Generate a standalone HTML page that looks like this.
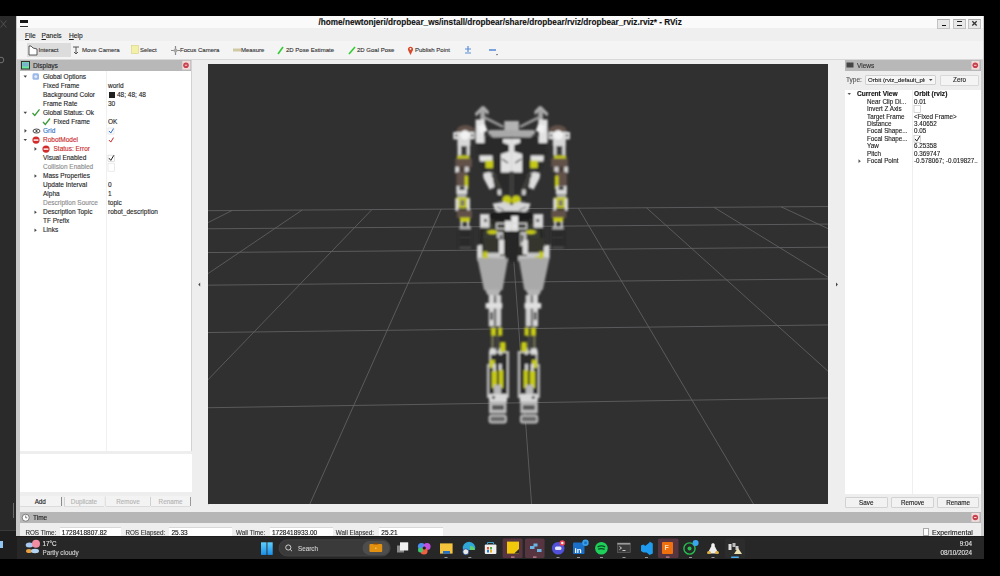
<!DOCTYPE html>
<html><head><meta charset="utf-8">
<style>
*{margin:0;padding:0;box-sizing:border-box}
html,body{width:1000px;height:576px;overflow:hidden;background:#000;font-family:"Liberation Sans",sans-serif}
.a{position:absolute}
.t{position:absolute;line-height:10px;height:10px;white-space:nowrap;-webkit-text-stroke:0.12px currentColor}
svg{position:absolute;overflow:visible}
</style></head><body>
<div class="a" style="left:0px;top:16px;width:17px;height:514px;background:#2a2a2a;"></div>
<div class="a" style="left:0px;top:530px;width:17px;height:30px;background:#1e1e1e;"></div>
<div class="a" style="left:0px;top:530.2px;width:17px;height:0.8px;background:#3a3a3a;"></div>
<div class="a" style="left:12.5px;top:503px;width:1.2px;height:15px;background:#6a6a6a;"></div>
<div class="a" style="left:0px;top:541px;width:3px;height:7px;background:#8fc5f0;"></div>
<svg style="left:0;top:0" width="20" height="80"><path d="M0.5 20.5 L6.5 27.5 M6.5 20.5 L0.5 27.5" stroke="#555" stroke-width="0.9"/><circle cx="1" cy="60" r="2.8" fill="none" stroke="#777" stroke-width="0.9"/></svg>
<div class="a" style="left:17px;top:16px;width:966px;height:520px;background:#eeeeee;"></div>
<div class="a" style="left:16px;top:16px;width:4px;height:520.4px;background:#c9c9c9;"></div>
<div class="a" style="left:980.5px;top:16px;width:3px;height:520.4px;background:#cdcdcd;"></div>
<div class="a" style="left:17px;top:16px;width:966px;height:12px;background:#fafafa;"></div>
<div class="a" style="left:17px;top:28px;width:966px;height:13px;background:#efefef;"></div>
<div class="a" style="left:17px;top:41px;width:966px;height:19px;background:#f4f4f4;"></div>
<div class="a" style="left:17px;top:59px;width:966px;height:1px;background:#d8d8d8;"></div>
<div class="a" style="left:20px;top:20px;width:8px;height:3px;background:#151515;"></div>
<div class="a" style="left:20px;top:25.5px;width:8px;height:1.5px;background:#303030;"></div>
<div class="t" style="left:318.5px;top:17.8px;font-size:8.2px;font-weight:bold;color:#111">/home/newtonjeri/dropbear_ws/install/dropbear/share/dropbear/rviz/dropbear_rviz.rviz* - RViz</div>
<div class="a" style="left:937.3px;top:19px;width:13px;height:9.5px;background:#e8e8e8;border:1px solid #c2c2c2;border-top-color:#aaa"></div>
<div class="a" style="left:952.6px;top:19px;width:13px;height:9.5px;background:#e8e8e8;border:1px solid #c2c2c2;border-top-color:#aaa"></div>
<div class="a" style="left:967.8px;top:19px;width:13px;height:9.5px;background:#e8e8e8;border:1px solid #c2c2c2;border-top-color:#aaa"></div>
<div class="a" style="left:941.6px;top:24.6px;width:4.4px;height:1.5px;background:#111;"></div>
<div class="a" style="left:956.7px;top:21.2px;width:5.4px;height:1.3px;background:#222;"></div>
<div class="a" style="left:956.7px;top:24.5px;width:5.4px;height:1.3px;background:#222;"></div>
<svg style="left:0;top:0" width="1000" height="40"><path d="M972.3 21.3 L976.7 25.5 M976.7 21.3 L972.3 25.5" stroke="#333" stroke-width="1.3"/></svg>
<div class="t" style="left:25px;top:31.00px;font-size:6.6px;color:#1e1e1e;"><u>F</u>ile</div>
<div class="t" style="left:41.5px;top:31.00px;font-size:6.6px;color:#1e1e1e;"><u>P</u>anels</div>
<div class="t" style="left:69px;top:31.00px;font-size:6.6px;color:#1e1e1e;"><u>H</u>elp</div>
<div class="a" style="left:26.5px;top:42.8px;width:44px;height:14px;background:#dcdcdc;"></div>
<div class="t" style="left:38.5px;top:45.00px;font-size:6.0px;color:#333;">Interact</div>
<div class="t" style="left:82px;top:45.00px;font-size:6.0px;color:#333;">Move Camera</div>
<div class="t" style="left:140px;top:45.00px;font-size:6.0px;color:#333;">Select</div>
<div class="t" style="left:180px;top:45.00px;font-size:6.0px;color:#333;">Focus Camera</div>
<div class="t" style="left:241px;top:45.00px;font-size:6.0px;color:#333;">Measure</div>
<div class="t" style="left:286px;top:45.00px;font-size:6.0px;color:#333;">2D Pose Estimate</div>
<div class="t" style="left:357px;top:45.00px;font-size:6.0px;color:#333;">2D Goal Pose</div>
<div class="t" style="left:415px;top:45.00px;font-size:6.0px;color:#333;">Publish Point</div>
<svg style="left:0;top:0" width="1000" height="576"><path d="M29 55 L29 46 L31 46 L33 48 L37 49 L37 55 Z" fill="#fff" stroke="#333" stroke-width="0.8"/><path d="M73 47 L79 47 M76 47 L76 54 M74 52 L76 54 L78 52" stroke="#555" stroke-width="1" fill="none"/><rect x="131.5" y="45.5" width="7" height="8" fill="#f3f0a8" stroke="#d8d080" stroke-width="0.6"/><path d="M171 50.5 L180 50.5 M175.5 46 L175.5 55" stroke="#888" stroke-width="1.2"/><circle cx="175.5" cy="50.5" r="2" fill="#aaa"/><rect x="233" y="48.5" width="8" height="3" fill="#cfc9a6"/><path d="M278 54 L283 47" stroke="#3c3" stroke-width="1.6"/><path d="M349 54 L355 47" stroke="#3c3" stroke-width="1.6"/><path d="M410.5 55 L408 50 A2.6 2.6 0 1 1 413 50 Z" fill="#d8482a"/><circle cx="410.5" cy="48.8" r="0.9" fill="#fff"/><path d="M465 49 L471 49 M468 46 L468 52 M465 53 L471 53" stroke="#5a8ed8" stroke-width="1.2"/><path d="M489 50 L496 50" stroke="#5a8ed8" stroke-width="1.6"/><path d="M496 54 L498 54 L497 55.5 Z" fill="#555"/></svg>
<div class="a" style="left:20px;top:60px;width:171.5px;height:10.8px;background:#b8b8b8;"></div>
<svg style="left:0;top:0" width="1000" height="576"><rect x="21.5" y="61.5" width="8" height="7.5" fill="#6e9" stroke="#333" stroke-width="1"/><rect x="22.5" y="62.5" width="6" height="4" fill="#7ab0d0"/></svg>
<div class="t" style="left:33px;top:60.50px;font-size:6.6px;color:#222;">Displays</div>
<svg style="left:0;top:0" width="1000" height="576"><rect x="182.3" y="60.8" width="8" height="8.8" fill="#f1dcdc"/><circle cx="186" cy="65.2" r="2.8" fill="#c8404c"/><path d="M184.8 65.2 L187.2 65.2" stroke="#fff" stroke-width="0.8"/></svg>
<div class="a" style="left:20px;top:70.8px;width:171.5px;height:380.5px;background:#ffffff;"></div>
<div class="a" style="left:191px;top:60px;width:1px;height:391px;background:#d2d2d2;"></div>
<div class="a" style="left:207.5px;top:64px;width:0.8px;height:441px;background:#d8d8d8;"></div>
<div class="a" style="left:105.5px;top:70.8px;width:0.8px;height:380.5px;background:#f0f0f0;"></div>
<div class="a" style="left:20px;top:453.8px;width:171.5px;height:38.7px;background:#ffffff;"></div>
<div class="t" style="left:43px;top:71.80px;font-size:6.5px;color:#1e1e1e;">Global Options</div>
<div class="t" style="left:43px;top:80.84px;font-size:6.5px;color:#1e1e1e;">Fixed Frame</div>
<div class="t" style="left:108px;top:80.84px;font-size:6.5px;color:#1e1e1e;">world</div>
<div class="t" style="left:43px;top:89.88px;font-size:6.5px;color:#1e1e1e;">Background Color</div>
<div class="a" style="left:109px;top:91.88px;width:6px;height:6px;background:#202020;"></div>
<div class="t" style="left:117px;top:89.88px;font-size:6.5px;color:#1e1e1e;">48; 48; 48</div>
<div class="t" style="left:43px;top:98.92px;font-size:6.5px;color:#1e1e1e;">Frame Rate</div>
<div class="t" style="left:108px;top:98.92px;font-size:6.5px;color:#1e1e1e;">30</div>
<div class="t" style="left:43px;top:107.96px;font-size:6.5px;color:#1e1e1e;">Global Status: Ok</div>
<div class="t" style="left:53.5px;top:117.00px;font-size:6.5px;color:#1e1e1e;">Fixed Frame</div>
<div class="t" style="left:108px;top:117.00px;font-size:6.5px;color:#1e1e1e;">OK</div>
<div class="t" style="left:43px;top:126.04px;font-size:6.5px;color:#2f6fc8;">Grid</div>
<div class="t" style="left:43px;top:135.08px;font-size:6.5px;color:#c8282a;">RobotModel</div>
<div class="t" style="left:53.5px;top:144.12px;font-size:6.5px;color:#c8282a;">Status: Error</div>
<div class="t" style="left:43px;top:153.16px;font-size:6.5px;color:#1e1e1e;">Visual Enabled</div>
<div class="t" style="left:43px;top:162.20px;font-size:6.5px;color:#8a8a8a;">Collision Enabled</div>
<div class="t" style="left:43px;top:171.24px;font-size:6.5px;color:#1e1e1e;">Mass Properties</div>
<div class="t" style="left:43px;top:180.28px;font-size:6.5px;color:#1e1e1e;">Update Interval</div>
<div class="t" style="left:108px;top:180.28px;font-size:6.5px;color:#1e1e1e;">0</div>
<div class="t" style="left:43px;top:189.32px;font-size:6.5px;color:#1e1e1e;">Alpha</div>
<div class="t" style="left:108px;top:189.32px;font-size:6.5px;color:#1e1e1e;">1</div>
<div class="t" style="left:43px;top:198.36px;font-size:6.5px;color:#8a8a8a;">Description Source</div>
<div class="t" style="left:108px;top:198.36px;font-size:6.5px;color:#1e1e1e;">topic</div>
<div class="t" style="left:43px;top:207.40px;font-size:6.5px;color:#1e1e1e;">Description Topic</div>
<div class="t" style="left:108px;top:207.40px;font-size:6.5px;color:#1e1e1e;">robot_description</div>
<div class="t" style="left:43px;top:216.44px;font-size:6.5px;color:#1e1e1e;">TF Prefix</div>
<div class="t" style="left:43px;top:225.48px;font-size:6.5px;color:#1e1e1e;">Links</div>
<svg style="left:0;top:0" width="1000" height="576"><path d="M23.5 75.6 L27 75.6 L25.25 77.8Z" fill="#444"/><rect x="32.5" y="73.3" width="6.5" height="6.5" rx="1.5" fill="#9ab8e8"/><circle cx="35.75" cy="76.55" r="1.6" fill="#dde8f8"/><path d="M23.5 111.75999999999999 L27 111.75999999999999 L25.25 113.96Z" fill="#444"/><path d="M32.5 112.96 L34.8 115.46 L39.5 109.46" stroke="#3a9a3a" stroke-width="1.3" fill="none"/><path d="M43 122.0 L45.3 124.5 L50 118.5" stroke="#3a9a3a" stroke-width="1.3" fill="none"/><path d="M24.5 129.04 L24.5 132.64 L26.8 130.84Z" fill="#444"/><ellipse cx="36.5" cy="131.04" rx="3.5" ry="2" fill="none" stroke="#444" stroke-width="1"/><circle cx="36.5" cy="131.04" r="1.1" fill="#444"/><rect x="108" y="128.04" width="6" height="6" fill="#fff" stroke="#ddd" stroke-width="0.6"/><path d="M109 131.04 L110.8 133.04 L113.5 128.54" stroke="#2f6fc8" stroke-width="1" fill="none"/><path d="M23.5 138.88 L27 138.88 L25.25 141.07999999999998Z" fill="#444"/><circle cx="36" cy="140.07999999999998" r="3.6" fill="#d42a2a"/><rect x="33.6" y="139.38" width="4.8" height="1.4" fill="#fff"/><path d="M109 140.07999999999998 L110.8 142.07999999999998 L113.5 137.57999999999998" stroke="#c8282a" stroke-width="1" fill="none"/><path d="M34.5 147.12 L34.5 150.72 L36.8 148.92000000000002Z" fill="#444"/><circle cx="46" cy="149.12" r="3.6" fill="#d42a2a"/><rect x="43.6" y="148.42000000000002" width="4.8" height="1.4" fill="#fff"/><rect x="108" y="155.15999999999997" width="6.5" height="6.5" fill="#fff" stroke="#ccc" stroke-width="0.6"/><path d="M109 158.15999999999997 L110.8 160.35999999999996 L113.8 155.35999999999996" stroke="#222" stroke-width="1" fill="none"/><rect x="108" y="163.2" width="6.5" height="8" fill="#fff" stroke="#ddd" stroke-width="0.6"/><path d="M34.5 174.24 L34.5 177.84 L36.8 176.04000000000002Z" fill="#444"/><path d="M34.5 210.39999999999998 L34.5 213.99999999999997 L36.8 212.2Z" fill="#444"/><path d="M34.5 228.47999999999996 L34.5 232.07999999999996 L36.8 230.27999999999997Z" fill="#444"/></svg>
<div class="a" style="left:20px;top:495.8px;width:40.5px;height:11.3px;background:#f3f3f3;border-bottom:1px solid #dcdcdc"></div>
<div class="t" style="left:20px;width:40.5px;text-align:center;top:496.6px;font-size:6.3px;color:#222">Add</div>
<div class="a" style="left:64px;top:495.8px;width:40px;height:11.3px;background:#f3f3f3;border-bottom:1px solid #dcdcdc"></div>
<div class="t" style="left:64px;width:40px;text-align:center;top:496.6px;font-size:6.3px;color:#b4b4b4">Duplicate</div>
<div class="a" style="left:106px;top:495.8px;width:44px;height:11.3px;background:#f3f3f3;border-bottom:1px solid #dcdcdc"></div>
<div class="t" style="left:106px;width:44px;text-align:center;top:496.6px;font-size:6.3px;color:#b4b4b4">Remove</div>
<div class="a" style="left:151px;top:495.8px;width:39px;height:11.3px;background:#f3f3f3;border-bottom:1px solid #dcdcdc"></div>
<div class="t" style="left:151px;width:39px;text-align:center;top:496.6px;font-size:6.3px;color:#b4b4b4">Rename</div>
<div class="a" style="left:60.5px;top:497px;width:1px;height:9px;background:#8a8a8a;"></div>
<div class="a" style="left:190px;top:497px;width:1px;height:9px;background:#9a9a9a;"></div>
<div class="a" style="left:63.5px;top:497px;width:0.8px;height:9px;background:#d0d0d0;"></div>
<div class="a" style="left:105px;top:497px;width:0.8px;height:9px;background:#e0e0e0;"></div>
<div class="a" style="left:150.3px;top:497px;width:0.8px;height:9px;background:#d0d0d0;"></div>
<div class="a" style="left:208px;top:64.4px;width:620px;height:440px;background:#303030;overflow:hidden">
<svg style="left:0;top:0" width="620" height="440" stroke="#626264" stroke-width="0.85" fill="none"><line x1="-46.5" y1="147.0" x2="639.8" y2="142.4"/><line x1="-93.1" y1="165.5" x2="685.8" y2="159.6"/><line x1="-154.5" y1="189.9" x2="745.9" y2="182.1"/><line x1="-239.2" y1="223.6" x2="827.8" y2="212.8"/><line x1="-363.5" y1="273.0" x2="945.6" y2="256.9"/><line x1="-563.7" y1="352.6" x2="1129.9" y2="326.0"/><line x1="-939.7" y1="502.0" x2="1459.2" y2="449.3"/><line x1="-46.5" y1="147.0" x2="-1286.3" y2="639.8"/><line x1="24.1" y1="146.5" x2="-942.9" y2="630.4"/><line x1="94.2" y1="146.0" x2="-609.5" y2="621.2"/><line x1="163.9" y1="145.6" x2="-285.7" y2="612.2"/><line x1="233.2" y1="145.1" x2="29.0" y2="603.6"/><line x1="302.0" y1="144.6" x2="334.9" y2="595.1"/><line x1="370.4" y1="144.2" x2="632.4" y2="586.9"/><line x1="438.4" y1="143.7" x2="921.8" y2="578.9"/><line x1="505.9" y1="143.3" x2="1203.5" y2="571.2"/><line x1="573.1" y1="142.8" x2="1477.7" y2="563.6"/><line x1="639.8" y1="142.4" x2="1744.8" y2="556.3"/></svg>
</div>
<svg style="left:0;top:0" width="1000" height="576"><path d="M200.2 282.6 L200.2 286.4 L198.3 284.5Z" fill="#444"/><path d="M836 282.6 L836 286.4 L837.9 284.5Z" fill="#444"/></svg>
<svg style="left:0;top:0" width="1000" height="576"><defs><filter id="bl" x="-5%" y="-5%" width="110%" height="110%"><feGaussianBlur stdDeviation="0.85"/></filter></defs><g filter="url(#bl)"><polygon points="476,137 511.5,137 511.5,200 500,200 484,172 478,158" fill="#2b2c29" /><polygon points="474.8,113.5 481.8,106.3 484.2,106.3 489,111.5 488.2,115 483.5,110.8 482,110.8 476.2,116.5" fill="#b0b0b0" /><rect x="480.2" y="109.5" width="4.8" height="17.2" fill="#a4a4a4" /><rect x="475.6" y="119.5" width="8.9" height="23.5" fill="#e2e2e2" /><polygon points="478,126 485,124 487.5,131 480,133" fill="#f2f2f2" /><line x1="484.5" y1="117.5" x2="503.25" y2="126.8" stroke="#9a9a9a" stroke-width="2.6"/><rect x="504.3" y="121" width="7.65" height="9.5" fill="#b4b4b4" /><polygon points="488.7,130 511.95,130 511.95,137 493,137.5 488,133.5" fill="#a9a9a9" /><polygon points="503,139 511.95,139 511.95,172.5 501,172.5 501,154 509,151.5 509,145 503,142.8" fill="#e2e2e2" /><line x1="502" y1="159" x2="508" y2="163" stroke="#3a3a3a" stroke-width="1.4"/><line x1="486" y1="160" x2="494" y2="176" stroke="#3b3b39" stroke-width="3.6"/><rect x="479.5" y="155.5" width="13.0" height="6.0" fill="#e2e2e2" /><rect x="485.5" y="160.5" width="7.5" height="7.5" fill="#c6ca14" /><rect x="509.3" y="171.5" width="2.65" height="27.5" fill="#3e3e3c" /><polygon points="483,173.5 488.7,172 496,175 493,180 494.5,187 489.7,189.7 483.5,178" fill="#dcdcdc" /><line x1="493" y1="174" x2="506.5" y2="204" stroke="#3c3c3a" stroke-width="4.2"/><rect x="497.5" y="189.5" width="3.5" height="5.5" fill="#d0d0d0" /><ellipse cx="507" cy="200.5" rx="4.6" ry="5" fill="#c6ca14"/><polygon points="492.6,203.5 504,201.7 511.95,205 511.95,214.2 503,214 495,210.5" fill="#d6d6d6" /><line x1="497" y1="207" x2="504" y2="210" stroke="#555" stroke-width="1"/><polygon points="482,214 511.95,214 511.95,262 479,262 480,240" fill="#2a2b27" /><ellipse cx="511.5" cy="216" rx="23" ry="5" fill="#1a1a1a"/><ellipse cx="490.5" cy="238" rx="8.5" ry="15.5" fill="#393b33" stroke="#1c1c1c" stroke-width="1.2"/><rect x="480" y="214" width="9.5" height="13.7" fill="#d8d8d8" /><rect x="484" y="219" width="3" height="3" fill="#555" /><rect x="505" y="216" width="6.95" height="15" fill="#e6e6e6" /><rect x="496.75" y="223.5" width="15.2" height="5.25" fill="none" stroke="#d8d8d8" stroke-width="1.4"/><ellipse cx="492.5" cy="232" rx="5.5" ry="2" fill="#c6ca14"/><rect x="496.75" y="232" width="6.25" height="14" fill="#bdbdbd" /><rect x="500" y="235" width="2" height="7" fill="#333" /><rect x="477.2" y="246.7" width="4.8" height="12.3" fill="#dcdcdc" /><rect x="477.2" y="256" width="27.8" height="5" fill="#c4c4c4" /><rect x="482.4" y="250.8" width="5.2" height="8.4" fill="#c6ca14" /><rect x="505.3" y="232" width="6.65" height="30" fill="#252525" /><ellipse cx="465.5" cy="131" rx="9" ry="6" fill="#62514a"/><rect x="453.25" y="132" width="21.35" height="7.3" fill="#e4e4e4" /><rect x="455" y="134" width="2.5" height="3" fill="#666" /><rect x="471" y="134" width="2.2" height="3" fill="#666" /><rect x="457.4" y="133" width="13.0" height="13" fill="#d8d8d8" /><circle cx="465" cy="135" r="4.7" fill="#f2f2f2"/><rect x="457.6" y="146" width="3.4" height="9.5" fill="#dcdcdc" /><rect x="466.5" y="146" width="3.5" height="9.5" fill="#d4d4d4" /><rect x="461" y="146" width="5.5" height="9.5" fill="#3a3a3a" /><rect x="457" y="155.5" width="12.5" height="4.5" fill="#c6ca14" /><rect x="455.3" y="158.5" width="16.7" height="8.8" fill="#62514a" /><rect x="455.5" y="166.5" width="15.5" height="5.5" fill="#4a3e38" /><rect x="455" y="166.7" width="4" height="6.3" fill="#d4d4d4" /><rect x="464.7" y="166.7" width="4.1" height="5.3" fill="#cfcfcf" /><rect x="456.3" y="172" width="11.1" height="15" fill="#62514a" /><rect x="464.7" y="175.6" width="3.7" height="13.4" fill="#c6ca14" /><rect x="456.3" y="186" width="11.1" height="8.4" fill="#d8d8d8" /><rect x="457" y="194.4" width="9.5" height="3.6" fill="#a8a8a8" /><rect x="459.5" y="186.5" width="5.0" height="3.5" fill="#2a2a2a" /><rect x="455.6" y="197.5" width="13.9" height="10.8" fill="#c6ca14" /><rect x="455.3" y="198.5" width="3.2" height="12.5" fill="#dadada" /><rect x="467" y="198.5" width="3" height="12.5" fill="#dadada" /><rect x="460.5" y="200" width="4.0" height="6" fill="#7a7a6a" /><rect x="456.9" y="210.2" width="15.1" height="7.8" fill="#62514a" /><rect x="460" y="217.5" width="10" height="4.7" fill="#c6ca14" /><rect x="460.5" y="221.7" width="2.0" height="5.2" fill="#dadada" /><rect x="467" y="221.7" width="2" height="5.2" fill="#dadada" /><rect x="459.5" y="226.4" width="11.5" height="3.1" fill="#b0b0b0" /><rect x="458.5" y="229.5" width="13.0" height="19.25" fill="#2b2b2b" /><rect x="459.5" y="237" width="11.5" height="1" fill="#3a3a3a" /><rect x="459.5" y="246.7" width="11.5" height="2.05" fill="#505050" /><g transform="translate(1023.2,0) scale(-1,1)"><polygon points="476,137 511.5,137 511.5,200 500,200 484,172 478,158" fill="#2b2c29" /><polygon points="474.8,113.5 481.8,106.3 484.2,106.3 489,111.5 488.2,115 483.5,110.8 482,110.8 476.2,116.5" fill="#b0b0b0" /><rect x="480.2" y="109.5" width="4.8" height="17.2" fill="#a4a4a4" /><rect x="475.6" y="119.5" width="8.9" height="23.5" fill="#e2e2e2" /><polygon points="478,126 485,124 487.5,131 480,133" fill="#f2f2f2" /><line x1="484.5" y1="117.5" x2="503.25" y2="126.8" stroke="#9a9a9a" stroke-width="2.6"/><rect x="504.3" y="121" width="7.65" height="9.5" fill="#b4b4b4" /><polygon points="488.7,130 511.95,130 511.95,137 493,137.5 488,133.5" fill="#a9a9a9" /><polygon points="503,139 511.95,139 511.95,172.5 501,172.5 501,154 509,151.5 509,145 503,142.8" fill="#e2e2e2" /><line x1="502" y1="159" x2="508" y2="163" stroke="#3a3a3a" stroke-width="1.4"/><line x1="486" y1="160" x2="494" y2="176" stroke="#3b3b39" stroke-width="3.6"/><rect x="479.5" y="155.5" width="13.0" height="6.0" fill="#e2e2e2" /><rect x="485.5" y="160.5" width="7.5" height="7.5" fill="#c6ca14" /><rect x="509.3" y="171.5" width="2.65" height="27.5" fill="#3e3e3c" /><polygon points="483,173.5 488.7,172 496,175 493,180 494.5,187 489.7,189.7 483.5,178" fill="#dcdcdc" /><line x1="493" y1="174" x2="506.5" y2="204" stroke="#3c3c3a" stroke-width="4.2"/><rect x="497.5" y="189.5" width="3.5" height="5.5" fill="#d0d0d0" /><ellipse cx="507" cy="200.5" rx="4.6" ry="5" fill="#c6ca14"/><polygon points="492.6,203.5 504,201.7 511.95,205 511.95,214.2 503,214 495,210.5" fill="#d6d6d6" /><line x1="497" y1="207" x2="504" y2="210" stroke="#555" stroke-width="1"/><polygon points="482,214 511.95,214 511.95,262 479,262 480,240" fill="#2a2b27" /><ellipse cx="511.5" cy="216" rx="23" ry="5" fill="#1a1a1a"/><ellipse cx="490.5" cy="238" rx="8.5" ry="15.5" fill="#393b33" stroke="#1c1c1c" stroke-width="1.2"/><rect x="480" y="214" width="9.5" height="13.7" fill="#d8d8d8" /><rect x="484" y="219" width="3" height="3" fill="#555" /><rect x="505" y="216" width="6.95" height="15" fill="#e6e6e6" /><rect x="496.75" y="223.5" width="15.2" height="5.25" fill="none" stroke="#d8d8d8" stroke-width="1.4"/><ellipse cx="492.5" cy="232" rx="5.5" ry="2" fill="#c6ca14"/><rect x="496.75" y="232" width="6.25" height="14" fill="#bdbdbd" /><rect x="500" y="235" width="2" height="7" fill="#333" /><rect x="477.2" y="246.7" width="4.8" height="12.3" fill="#dcdcdc" /><rect x="477.2" y="256" width="27.8" height="5" fill="#c4c4c4" /><rect x="482.4" y="250.8" width="5.2" height="8.4" fill="#c6ca14" /><rect x="505.3" y="232" width="6.65" height="30" fill="#252525" /><ellipse cx="465.5" cy="131" rx="9" ry="6" fill="#62514a"/><rect x="453.25" y="132" width="21.35" height="7.3" fill="#e4e4e4" /><rect x="455" y="134" width="2.5" height="3" fill="#666" /><rect x="471" y="134" width="2.2" height="3" fill="#666" /><rect x="457.4" y="133" width="13.0" height="13" fill="#d8d8d8" /><circle cx="465" cy="135" r="4.7" fill="#f2f2f2"/><rect x="457.6" y="146" width="3.4" height="9.5" fill="#dcdcdc" /><rect x="466.5" y="146" width="3.5" height="9.5" fill="#d4d4d4" /><rect x="461" y="146" width="5.5" height="9.5" fill="#3a3a3a" /><rect x="457" y="155.5" width="12.5" height="4.5" fill="#c6ca14" /><rect x="455.3" y="158.5" width="16.7" height="8.8" fill="#62514a" /><rect x="455.5" y="166.5" width="15.5" height="5.5" fill="#4a3e38" /><rect x="455" y="166.7" width="4" height="6.3" fill="#d4d4d4" /><rect x="464.7" y="166.7" width="4.1" height="5.3" fill="#cfcfcf" /><rect x="456.3" y="172" width="11.1" height="15" fill="#62514a" /><rect x="464.7" y="175.6" width="3.7" height="13.4" fill="#c6ca14" /><rect x="456.3" y="186" width="11.1" height="8.4" fill="#d8d8d8" /><rect x="457" y="194.4" width="9.5" height="3.6" fill="#a8a8a8" /><rect x="459.5" y="186.5" width="5.0" height="3.5" fill="#2a2a2a" /><rect x="455.6" y="197.5" width="13.9" height="10.8" fill="#c6ca14" /><rect x="455.3" y="198.5" width="3.2" height="12.5" fill="#dadada" /><rect x="467" y="198.5" width="3" height="12.5" fill="#dadada" /><rect x="460.5" y="200" width="4.0" height="6" fill="#7a7a6a" /><rect x="456.9" y="210.2" width="15.1" height="7.8" fill="#62514a" /><rect x="460" y="217.5" width="10" height="4.7" fill="#c6ca14" /><rect x="460.5" y="221.7" width="2.0" height="5.2" fill="#dadada" /><rect x="467" y="221.7" width="2" height="5.2" fill="#dadada" /><rect x="459.5" y="226.4" width="11.5" height="3.1" fill="#b0b0b0" /><rect x="458.5" y="229.5" width="13.0" height="19.25" fill="#2b2b2b" /><rect x="459.5" y="237" width="11.5" height="1" fill="#3a3a3a" /><rect x="459.5" y="246.7" width="11.5" height="2.05" fill="#505050" /></g><rect x="483" y="238" width="16" height="15" fill="#34362f" /><rect x="477.2" y="245" width="4.8" height="13.5" fill="#d8d8d8" /><rect x="487" y="252.8" width="13" height="3.6" fill="#c8c8c8" /><rect x="499" y="240" width="5" height="14.6" fill="#dcdcdc" /><polygon points="477.2,257.5 508,258.5 502.5,290 484,290" fill="#a9a9a9" /><rect x="483.2" y="251.5" width="4.3" height="6.7" fill="#c6ca14" /><polygon points="485,289.5 501.5,289.5 498.5,295 487.5,295" fill="#b4b4b4" /><rect x="488.75" y="295" width="5.75" height="31.5" fill="#d4d4d4" /><rect x="495.5" y="295" width="5.75" height="31.5" fill="#cfcfcf" /><rect x="494.5" y="297" width="1.0" height="28" fill="#333" /><rect x="485.6" y="303" width="16.7" height="5.5" fill="#e0e0e0" /><rect x="490" y="312" width="3" height="8" fill="#555" /><rect x="490.8" y="327.5" width="5.2" height="8.3" fill="#c6ca14" /><rect x="498" y="327.5" width="4.3" height="8.3" fill="#c6ca14" /><rect x="491" y="335.8" width="3" height="14.2" fill="#6a6a50" /><rect x="496" y="335.8" width="3" height="16.2" fill="#444" /><rect x="500.2" y="342" width="5.2" height="12.6" fill="#c6ca14" /><path d="M488 397 L488 365 L490 365 L490 352 L508 352 L508 397 Z" fill="#2a2a2a" stroke="#bdbdbd" stroke-width="2.2"/><rect x="489.6" y="348.3" width="6.2" height="6.3" fill="#dcdcdc" /><rect x="499" y="348.3" width="3" height="6.3" fill="#dcdcdc" /><rect x="500.2" y="344" width="5.2" height="8" fill="#c6ca14" /><rect x="489.6" y="359.8" width="5.2" height="8.2" fill="#c6ca14" /><rect x="493.2" y="364" width="2.6" height="7" fill="#dcdcdc" /><rect x="499" y="364" width="2.6" height="7" fill="#dcdcdc" /><rect x="491.7" y="371" width="5.2" height="17" fill="#c6ca14" /><rect x="499" y="370" width="4.1" height="18" fill="#c6ca14" /><rect x="493.75" y="385" width="7.25" height="15" fill="#b8b8b8" /><rect x="489" y="394" width="18" height="8.5" fill="#d8d8d8" /><rect x="492" y="396" width="3" height="3" fill="#555" /><rect x="489" y="402.5" width="17.5" height="10.9" fill="#bcbcbc" /><rect x="492" y="405" width="12" height="5" fill="#5a5a5a" /><rect x="489.5" y="415.5" width="16.5" height="7" rx="2" fill="#6a6a6a" stroke="#c4c4c4" stroke-width="1.8"/><g transform="translate(1026.8,0) scale(-1,1)"><rect x="483" y="238" width="16" height="15" fill="#34362f" /><rect x="477.2" y="245" width="4.8" height="13.5" fill="#d8d8d8" /><rect x="487" y="252.8" width="13" height="3.6" fill="#c8c8c8" /><rect x="499" y="240" width="5" height="14.6" fill="#dcdcdc" /><polygon points="477.2,257.5 508,258.5 502.5,290 484,290" fill="#a9a9a9" /><rect x="483.2" y="251.5" width="4.3" height="6.7" fill="#c6ca14" /><polygon points="485,289.5 501.5,289.5 498.5,295 487.5,295" fill="#b4b4b4" /><rect x="488.75" y="295" width="5.75" height="31.5" fill="#d4d4d4" /><rect x="495.5" y="295" width="5.75" height="31.5" fill="#cfcfcf" /><rect x="494.5" y="297" width="1.0" height="28" fill="#333" /><rect x="485.6" y="303" width="16.7" height="5.5" fill="#e0e0e0" /><rect x="490" y="312" width="3" height="8" fill="#555" /><rect x="490.8" y="327.5" width="5.2" height="8.3" fill="#c6ca14" /><rect x="498" y="327.5" width="4.3" height="8.3" fill="#c6ca14" /><rect x="491" y="335.8" width="3" height="14.2" fill="#6a6a50" /><rect x="496" y="335.8" width="3" height="16.2" fill="#444" /><rect x="500.2" y="342" width="5.2" height="12.6" fill="#c6ca14" /><path d="M488 397 L488 365 L490 365 L490 352 L508 352 L508 397 Z" fill="#2a2a2a" stroke="#bdbdbd" stroke-width="2.2"/><rect x="489.6" y="348.3" width="6.2" height="6.3" fill="#dcdcdc" /><rect x="499" y="348.3" width="3" height="6.3" fill="#dcdcdc" /><rect x="500.2" y="344" width="5.2" height="8" fill="#c6ca14" /><rect x="489.6" y="359.8" width="5.2" height="8.2" fill="#c6ca14" /><rect x="493.2" y="364" width="2.6" height="7" fill="#dcdcdc" /><rect x="499" y="364" width="2.6" height="7" fill="#dcdcdc" /><rect x="491.7" y="371" width="5.2" height="17" fill="#c6ca14" /><rect x="499" y="370" width="4.1" height="18" fill="#c6ca14" /><rect x="493.75" y="385" width="7.25" height="15" fill="#b8b8b8" /><rect x="489" y="394" width="18" height="8.5" fill="#d8d8d8" /><rect x="492" y="396" width="3" height="3" fill="#555" /><rect x="489" y="402.5" width="17.5" height="10.9" fill="#bcbcbc" /><rect x="492" y="405" width="12" height="5" fill="#5a5a5a" /><rect x="489.5" y="415.5" width="16.5" height="7" rx="2" fill="#6a6a6a" stroke="#c4c4c4" stroke-width="1.8"/></g></g></svg>
<div class="a" style="left:845px;top:59.7px;width:135.5px;height:11.3px;background:#b8b8b8;"></div>
<svg style="left:0;top:0" width="1000" height="576"><rect x="846.5" y="62.5" width="7" height="5" fill="#444"/><rect x="971.5" y="60.9" width="8" height="8.8" fill="#f1dcdc"/><circle cx="975.3" cy="65.3" r="2.8" fill="#c8404c"/><path d="M974.1 65.3 L976.5 65.3" stroke="#fff" stroke-width="0.8"/></svg>
<div class="t" style="left:857px;top:60.50px;font-size:6.5px;color:#333;">Views</div>
<div class="t" style="left:846px;top:75.00px;font-size:6.5px;color:#555;">Type:</div>
<div class="a" style="left:864.7px;top:74.7px;width:71.3px;height:10.5px;background:#f6f6f6;border:1px solid #d0d0d0;border-radius:1px"></div>
<div class="t" style="left:868px;top:75.00px;font-size:6.1px;color:#222;width:57px;overflow:hidden">Orbit (rviz_default_plugins)</div>
<svg style="left:0;top:0" width="1000" height="576"><path d="M929 79 L932.5 79 L930.75 81Z" fill="#444"/></svg>
<div class="a" style="left:939.7px;top:74.5px;width:39.7px;height:11px;background:#f4f4f4;border:1px solid #d8d8d8;border-radius:1px"></div>
<div class="t" style="left:939.7px;width:39.7px;text-align:center;top:75px;font-size:6.3px;color:#222">Zero</div>
<div class="a" style="left:845px;top:89.7px;width:135.5px;height:404.3px;background:#ffffff;"></div>
<div class="a" style="left:912.3px;top:89.7px;width:0.8px;height:404.3px;background:#efefef;"></div>
<div class="t" style="left:857px;top:89.10px;font-size:6.6px;color:#111;font-weight:bold">Current View</div>
<div class="t" style="left:914px;top:89.10px;font-size:6.6px;color:#111;font-weight:bold">Orbit (rviz)</div>
<div class="t" style="left:867px;top:96.57px;font-size:6.3px;color:#222;">Near Clip Di...</div>
<div class="t" style="left:914px;top:96.57px;font-size:6.3px;color:#222;">0.01</div>
<div class="t" style="left:867px;top:104.04px;font-size:6.3px;color:#222;">Invert Z Axis</div>
<div class="t" style="left:867px;top:111.51px;font-size:6.3px;color:#222;">Target Frame</div>
<div class="t" style="left:914px;top:111.51px;font-size:6.3px;color:#222;">&lt;Fixed Frame&gt;</div>
<div class="t" style="left:867px;top:118.98px;font-size:6.3px;color:#222;">Distance</div>
<div class="t" style="left:914px;top:118.98px;font-size:6.3px;color:#222;">3.40652</div>
<div class="t" style="left:867px;top:126.45px;font-size:6.3px;color:#222;">Focal Shape...</div>
<div class="t" style="left:914px;top:126.45px;font-size:6.3px;color:#222;">0.05</div>
<div class="t" style="left:867px;top:133.92px;font-size:6.3px;color:#222;">Focal Shape...</div>
<div class="t" style="left:867px;top:141.39px;font-size:6.3px;color:#222;">Yaw</div>
<div class="t" style="left:914px;top:141.39px;font-size:6.3px;color:#222;">6.25358</div>
<div class="t" style="left:867px;top:148.86px;font-size:6.3px;color:#222;">Pitch</div>
<div class="t" style="left:914px;top:148.86px;font-size:6.3px;color:#222;">0.369747</div>
<div class="t" style="left:867px;top:156.33px;font-size:6.3px;color:#222;">Focal Point</div>
<div class="t" style="left:914px;top:156.33px;font-size:6.3px;color:#222;width:64px;overflow:hidden">-0.578067; -0.019827...</div>
<svg style="left:0;top:0" width="1000" height="576"><path d="M847.5 92.89999999999999 L851 92.89999999999999 L849.25 95.1Z" fill="#555"/><rect x="914" y="105.53999999999999" width="6.5" height="7" fill="#fff" stroke="#bbb" stroke-width="0.6"/><rect x="914" y="135.42" width="6.5" height="7" fill="#fff" stroke="#bbb" stroke-width="0.6"/><path d="M915 138.92 L916.8 141.11999999999998 L919.8 136.11999999999998" stroke="#222" stroke-width="1" fill="none"/><path d="M858.5 159.32999999999998 L858.5 162.92999999999998 L860.8 161.13Z" fill="#555"/></svg>
<div class="a" style="left:845px;top:497px;width:42.60000000000002px;height:11.3px;background:#f2f2f2;border:1px solid #d2d2d2;border-radius:1px"></div>
<div class="t" style="left:845px;width:42.60000000000002px;text-align:center;top:497.8px;font-size:6.3px;color:#222">Save</div>
<div class="a" style="left:891.4px;top:497px;width:42.5px;height:11.3px;background:#f2f2f2;border:1px solid #d2d2d2;border-radius:1px"></div>
<div class="t" style="left:891.4px;width:42.5px;text-align:center;top:497.8px;font-size:6.3px;color:#222">Remove</div>
<div class="a" style="left:937px;top:497px;width:42.39999999999998px;height:11.3px;background:#f2f2f2;border:1px solid #d2d2d2;border-radius:1px"></div>
<div class="t" style="left:937px;width:42.39999999999998px;text-align:center;top:497.8px;font-size:6.3px;color:#222">Rename</div>
<div class="a" style="left:20px;top:512.3px;width:960.5px;height:10.7px;background:#b6b6b6;"></div>
<svg style="left:0;top:0" width="1000" height="576"><circle cx="25.7" cy="517.7" r="3.5" fill="#fff" stroke="#666" stroke-width="0.8"/><path d="M25.7 515.5 L25.7 517.8 L27.3 517.8" stroke="#444" stroke-width="0.7" fill="none"/><rect x="971.5" y="513" width="8" height="8.8" fill="#f1dcdc"/><circle cx="975.3" cy="517.5" r="2.8" fill="#c8404c"/><path d="M974.1 517.5 L976.5 517.5" stroke="#fff" stroke-width="0.8"/></svg>
<div class="t" style="left:33px;top:512.70px;font-size:6.5px;color:#222;">Time</div>
<div class="t" style="left:25.4px;top:528.00px;font-size:6.3px;color:#333;">ROS Time:</div>
<div class="a" style="left:59.8px;top:527.2px;width:61.60000000000001px;height:10px;background:#fff;border-top:1px solid #d8d8d8"></div>
<div class="t" style="left:61.8px;top:528.00px;font-size:6.5px;color:#111;">1728418807.82</div>
<div class="t" style="left:125.4px;top:528.00px;font-size:6.3px;color:#333;">ROS Elapsed:</div>
<div class="a" style="left:169.4px;top:527.2px;width:62.900000000000006px;height:10px;background:#fff;border-top:1px solid #d8d8d8"></div>
<div class="t" style="left:171.4px;top:528.00px;font-size:6.5px;color:#111;">25.33</div>
<div class="t" style="left:236px;top:528.00px;font-size:6.3px;color:#333;">Wall Time:</div>
<div class="a" style="left:270px;top:527.2px;width:63px;height:10px;background:#fff;border-top:1px solid #d8d8d8"></div>
<div class="t" style="left:272px;top:528.00px;font-size:6.5px;color:#111;">1728418933.00</div>
<div class="t" style="left:335.8px;top:528.00px;font-size:6.3px;color:#333;">Wall Elapsed:</div>
<div class="a" style="left:379.3px;top:527.2px;width:63.69999999999999px;height:10px;background:#fff;border-top:1px solid #d8d8d8"></div>
<div class="t" style="left:381.3px;top:528.00px;font-size:6.5px;color:#111;">25.21</div>
<div class="a" style="left:922.6px;top:528px;width:6.5px;height:8px;background:#fff;border:1px solid #aaa"></div>
<div class="t" style="left:932px;top:528.30px;font-size:7px;color:#222;">Experimental</div>
<div class="a" style="left:16.5px;top:536px;width:967.5px;height:23.5px;background:#272727;"></div>
<div class="a" style="left:16.5px;top:536px;width:967.5px;height:1.2px;background:#1d1d1d;"></div>
<div class="a" style="left:0px;top:559.4px;width:1000px;height:17px;background:#000;"></div>
<svg style="left:0;top:0" width="1000" height="576"><ellipse cx="29.5" cy="545" rx="3.8" ry="2.5" fill="#a9c9f2"/><circle cx="36" cy="543.8" r="4" fill="#f18ea3"/><ellipse cx="29" cy="551" rx="3" ry="2" fill="#e8a040"/><ellipse cx="35" cy="551" rx="4" ry="2.2" fill="#b4d4f4"/><defs><linearGradient id="wg" x1="0" y1="0" x2="0" y2="1"><stop offset="0" stop-color="#5ccfff"/><stop offset="1" stop-color="#1b8fe8"/></linearGradient></defs><rect x="261" y="542.3" width="5.5" height="12.6" fill="url(#wg)"/><rect x="267.4" y="542.3" width="5.3" height="12.6" fill="url(#wg)"/><rect x="279" y="539.8" width="111.2" height="16.2" rx="8.1" fill="#3a3a3a" stroke="#4e4e4e" stroke-width="0.6"/><rect x="362.5" y="541" width="27" height="14" rx="7" fill="#4d4d4d"/><rect x="369.4" y="544" width="12.8" height="8" rx="1" fill="#e2900f"/><rect x="373.5" y="542.8" width="4.6" height="1.6" fill="#7a4a10"/><circle cx="375.8" cy="548.2" r="0.8" fill="#ffd060"/><circle cx="288.3" cy="547.5" r="2.6" fill="none" stroke="#ddd" stroke-width="0.9"/><path d="M290.2 549.4 L292 551.2" stroke="#ddd" stroke-width="0.9"/><rect x="397" y="545.5" width="7" height="7" fill="#8a8a8a"/><rect x="400" y="542.3" width="8.2" height="8.2" fill="#f0f0f0"/><circle cx="421.5" cy="546.5" r="3.6" fill="#4a8ef0"/><circle cx="427" cy="546.5" r="3.6" fill="#c050e0"/><circle cx="424" cy="551" r="3.6" fill="#f06040"/><circle cx="420.5" cy="550" r="2.5" fill="#40c870"/><circle cx="424.3" cy="548" r="1.6" fill="#202020"/><rect x="440" y="543.4" width="12.6" height="10.2" fill="#f6c43c"/><rect x="443" y="551" width="7" height="2.8" fill="#2a70c0"/><rect x="444.5" y="557" width="3" height="1" fill="#999"/><path d="M463 550 A6.3 6.3 0 1 1 475 550 L468.5 550 A2.5 2.5 0 0 0 466 553 Z" fill="#2fa8d8"/><path d="M470 546 A5 5 0 0 1 475 550 L470 550Z" fill="#5ed070"/><circle cx="465.8" cy="551.8" r="3" fill="#e8e8e8" stroke="#1a4a90" stroke-width="0.8"/><rect x="468.3" y="557" width="3" height="1" fill="#999"/><rect x="484.8" y="544.5" width="11.6" height="9.6" rx="1" fill="#f0f0f0"/><path d="M487.5 544.5 L487.5 542.5 L493.5 542.5 L493.5 544.5" stroke="#3aa0c8" stroke-width="1" fill="none"/><rect x="487" y="547" width="2" height="2.5" fill="#f05030"/><rect x="490" y="547" width="2" height="2.5" fill="#50b040"/><rect x="487" y="550" width="2" height="2.5" fill="#2080e0"/><rect x="490" y="550" width="2" height="2.5" fill="#f0b020"/><rect x="502.6" y="538.4" width="20" height="19.6" rx="1.5" fill="#563540"/><rect x="507" y="541.6" width="12" height="12" fill="#f2c80c"/><path d="M519 549 L519 553.6 L514.2 553.6Z" fill="#2a2a2a"/><rect x="511" y="556.6" width="3.5" height="1" fill="#e89aa8"/><rect x="525" y="538.4" width="19.6" height="19.6" rx="1.5" fill="#563540"/><rect x="530" y="546" width="4.5" height="3" fill="#6ab4e6"/><rect x="533.5" y="543.5" width="4" height="3" fill="#6ab4e6"/><rect x="537" y="549" width="4.5" height="3" fill="#6ab4e6"/><rect x="533" y="556.6" width="3.5" height="1" fill="#e89aa8"/><circle cx="558.2" cy="548.3" r="6.3" fill="#5050d8"/><rect x="555" y="546.5" width="6.5" height="3.5" rx="1.5" fill="#e8e8f8"/><circle cx="562.3" cy="543" r="2.8" fill="#f04050"/><circle cx="562.3" cy="543" r="1.2" fill="#fff"/><rect x="556.5" y="557" width="3" height="1" fill="#999"/><rect x="573" y="542.5" width="11.5" height="11.5" rx="1" fill="#1a70c8"/><text x="574.6" y="552.6" font-family="Liberation Sans" font-weight="bold" font-size="8" fill="#fff">in</text><circle cx="585.5" cy="542.8" r="3.2" fill="#3aa0e8"/><circle cx="585.5" cy="542.8" r="1.5" fill="#1a70c8"/><rect x="577" y="557" width="3" height="1" fill="#999"/><circle cx="601.4" cy="548.3" r="6.3" fill="#1ed05a"/><path d="M597.6 546.8 Q601.4 545 605.2 546.8 M598.2 549.2 Q601.4 548 604.6 549.4" stroke="#0a4a20" stroke-width="1.3" fill="none"/><rect x="600" y="557" width="3" height="1" fill="#999"/><rect x="617.4" y="543" width="12.8" height="9.6" fill="#3a3a3a" stroke="#6a6a6a" stroke-width="0.6"/><rect x="617.4" y="543" width="12.8" height="1.6" fill="#9a9a9a"/><path d="M619.5 546.5 L621.5 548 L619.5 549.5" stroke="#ddd" stroke-width="0.9" fill="none"/><rect x="622.5" y="550" width="3" height="0.9" fill="#ddd"/><rect x="622.5" y="557" width="3" height="1" fill="#999"/><path d="M649.5 541.6 L652.8 543.4 L652.8 553.4 L649.5 555 L642 548.5 L649.5 542.5Z M641 545.5 L643.5 544.5 L650 550 L650 552.5 L643.5 552.5 L641 551Z" fill="#1f9cf0"/><rect x="645" y="557" width="3" height="1" fill="#999"/><rect x="658" y="538.4" width="20.5" height="19.6" rx="1.5" fill="#563540"/><rect x="662" y="542" width="11" height="12" rx="1" fill="#f07010"/><text x="664.5" y="550" font-family="Liberation Sans" font-weight="bold" font-size="7" fill="#ffe0c0">F</text><rect x="666" y="556.6" width="3.5" height="1" fill="#e89aa8"/><circle cx="689.5" cy="548.5" r="5.6" fill="none" stroke="#26c050" stroke-width="1.4"/><circle cx="689.5" cy="548.5" r="2" fill="#26c050"/><circle cx="695.6" cy="543" r="3" fill="#3aa6f0"/><rect x="689" y="557" width="3" height="1" fill="#999"/><path d="M713 543 L718.5 553.5 L707.5 553.5Z" fill="#eeeeee"/><circle cx="713" cy="545" r="1.8" fill="#f4f4f4"/><ellipse cx="709" cy="552.5" rx="2" ry="1.5" fill="#e0b040"/><ellipse cx="717" cy="552.5" rx="2" ry="1.5" fill="#e0b040"/><rect x="711.5" y="557" width="3" height="1" fill="#999"/><rect x="725" y="538.4" width="20" height="19.6" rx="1.5" fill="#2c2c2c"/><rect x="728.5" y="544" width="3" height="6" fill="#ddd"/><rect x="732.5" y="543" width="3" height="4" fill="#bbb"/><rect x="735.5" y="546" width="3" height="4" fill="#ccc"/><path d="M738 548 L742 554 L734 554Z" fill="#e8e0b0"/><rect x="731" y="556.5" width="8" height="1.5" rx="0.7" fill="#4ab0f0"/></svg><div class="t" style="left:42.5px;top:539px;font-size:6.3px;color:#e8e8e8">17°C</div><div class="t" style="left:42.5px;top:547.5px;font-size:6.3px;color:#d0d0d0">Partly cloudy</div><div class="t" style="left:298px;top:543.5px;font-size:6.3px;color:#cfcfcf">Search</div><div class="t" style="left:930px;width:42px;text-align:right;top:538.5px;font-size:6.3px;color:#e0e0e0">9:04</div><div class="t" style="left:920px;width:52px;text-align:right;top:547.5px;font-size:6.3px;color:#e0e0e0">08/10/2024</div>
</body></html>
